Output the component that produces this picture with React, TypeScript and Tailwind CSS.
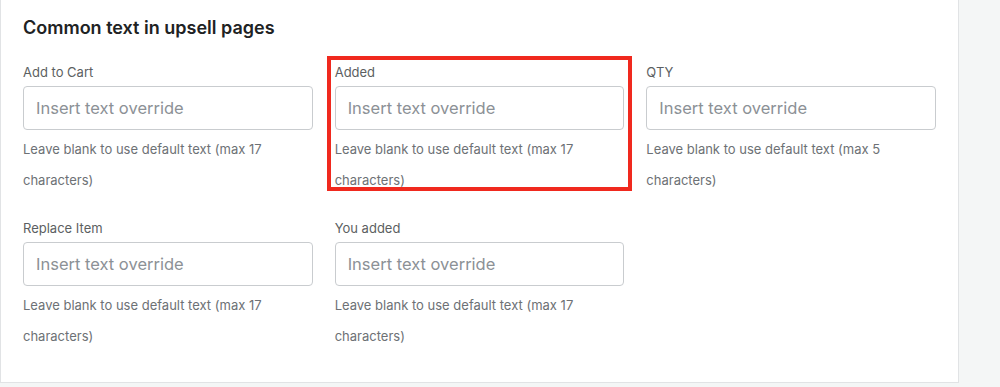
const fields = [
  { label: "Add to Cart", max: 17 },
  { label: "Added", max: 17, highlight: true },
  { label: "QTY", max: 5 },
  { label: "Replace Item", max: 17 },
  { label: "You added", max: 17 },
];

function Field({ label, max }: { label: string; max: number }) {
  return (
    <div className="flex flex-col">
      <label className="text-[13px] leading-5 text-[#5c5f62]">{label}</label>
      <input
        type="text"
        placeholder="Insert text override"
        className="mt-1 h-[44px] w-full rounded-[4px] border border-[#c9cccf] bg-white px-3 text-[16.5px] text-[#202223] placeholder:text-[#8c9196] outline-none"
      />
      <p className="mt-1 text-[13px] leading-[31px] text-[#6d7175]">
        Leave blank to use default text (max {max} characters)
      </p>
    </div>
  );
}

export default function App() {
  return (
    <div
      className="flex h-[387px] w-[1000px] bg-[#f4f6f6]"
      style={{ fontFamily: "Inter, 'Noto Sans', sans-serif" }}
    >
      <div className="relative h-[383px] w-[959px] border-r border-b border-l border-[#e1e3e5] bg-white pl-[22px] pr-[22px] pt-[17px]">
        <h2 className="text-[18px] font-semibold leading-[22px] text-[#202223]">
          Common text in upsell pages
        </h2>
        <div className="mt-[23px] grid w-[913px] grid-cols-3 gap-x-[22px] gap-y-[22px]">
          {fields.map((f) => (
            <Field key={f.label} label={f.label} max={f.max} />
          ))}
        </div>
        <div className="pointer-events-none absolute left-[326px] top-[56px] h-[135px] w-[305px] border-[4px] border-[#f0291e]" />
      </div>
    </div>
  );
}
